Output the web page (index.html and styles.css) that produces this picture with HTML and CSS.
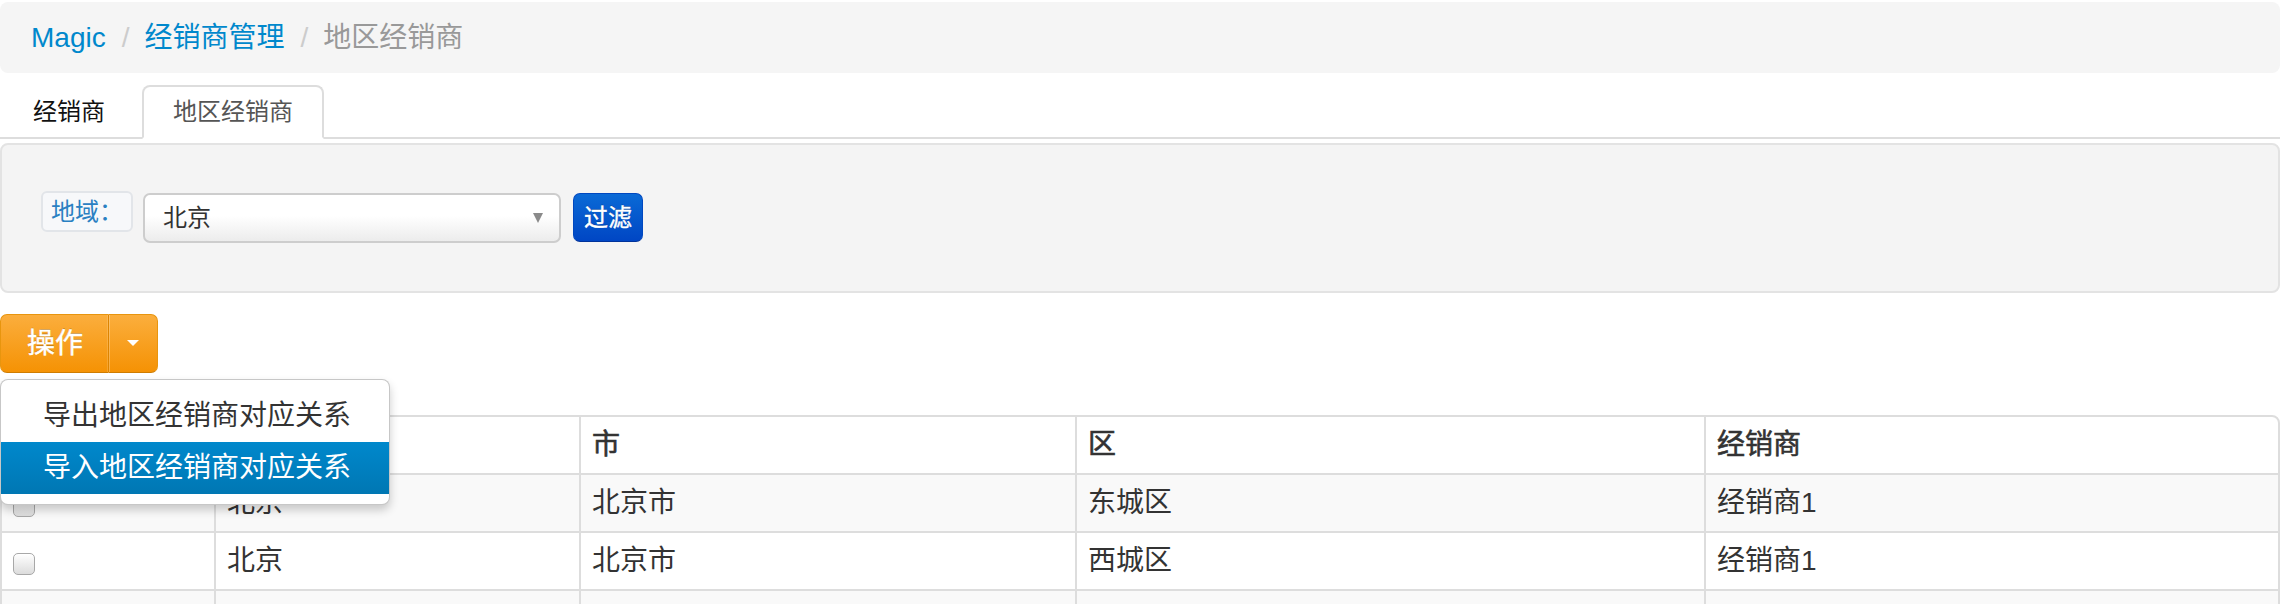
FILE: index.html
```html
<!DOCTYPE html>
<html lang="zh-CN">
<head>
<meta charset="utf-8">
<title>地区经销商</title>
<link rel="stylesheet" href="styles.css">
</head>
<body>
<div class="page">
  <ul class="breadcrumb">
    <li><a href="#">Magic</a><span class="divider">/</span></li>
    <li><a href="#">经销商管理</a><span class="divider">/</span></li>
    <li class="current">地区经销商</li>
  </ul>

  <ul class="tabs">
    <li class="tab"><a href="#">经销商</a></li>
    <li class="tab active"><a href="#">地区经销商</a></li>
  </ul>

  <div class="well">
    <form class="filter">
      <span class="addon">地域：</span>
      <div class="select"><span class="select-text">北京</span><span class="select-arrow"></span></div>
      <button type="button" class="btn btn-primary">过滤</button>
    </form>
  </div>

  <div class="actions">
    <div class="btn-group">
      <button type="button" class="btn btn-warning btn-main">操作</button>
      <button type="button" class="btn btn-warning btn-caret"><span class="caret"></span></button>
      <ul class="dropdown-menu">
        <li><a href="#">导出地区经销商对应关系</a></li>
        <li class="hover"><a href="#">导入地区经销商对应关系</a></li>
      </ul>
    </div>
  </div>

  <table class="grid">
    <thead>
      <tr>
        <th class="c1"></th>
        <th class="c2">省</th>
        <th class="c3">市</th>
        <th class="c4">区</th>
        <th class="c5">经销商</th>
      </tr>
    </thead>
    <tbody>
      <tr>
        <td><span class="check"></span></td>
        <td>北京</td>
        <td>北京市</td>
        <td>东城区</td>
        <td>经销商1</td>
      </tr>
      <tr>
        <td><span class="check"></span></td>
        <td>北京</td>
        <td>北京市</td>
        <td>西城区</td>
        <td>经销商1</td>
      </tr>
      <tr>
        <td>&nbsp;</td>
        <td>&nbsp;</td>
        <td>&nbsp;</td>
        <td>&nbsp;</td>
        <td>&nbsp;</td>
      </tr>
    </tbody>
  </table>
</div>
</body>
</html>
```

FILE: styles.css
```css
html, body {
  margin: 0;
  padding: 0;
  overflow: hidden;
  background: #fff;
}

body {
  font-family: "Liberation Sans", "Noto Sans CJK SC", sans-serif;
  color: #333;
}

.page {
  width: 2280px;
  padding-top: 2px;
}

a {
  text-decoration: none;
}

ul {
  list-style: none;
  margin: 0;
  padding: 0;
}

/* breadcrumb */
.breadcrumb {
  display: flex;
  background: #f5f5f5;
  border-radius: 8px;
  padding: 16px 31px 15px;
  font-size: 28px;
  line-height: 40px;
}

.breadcrumb a {
  color: #0088cc;
}

.breadcrumb .divider {
  color: #cccccc;
  padding: 0 15px 0 16px;
}

.breadcrumb .current {
  color: #999999;
}

/* tabs */
.tabs {
  display: flex;
  margin-top: 12px;
  border-bottom: 2px solid #dddddd;
  font-size: 24px;
  line-height: 34px;
}

.tab {
  margin-bottom: -2px;
}

.tab:first-child {
  margin-left: 2px;
  margin-right: 6px;
}

.tab a {
  display: block;
  padding: 8px 29px;
  border: 2px solid transparent;
  border-radius: 8px 8px 0 0;
  color: #111;
}

.tab.active a {
  background: #fff;
  border-color: #dddddd;
  border-bottom-color: #fff;
  color: #555;
}

/* filter well */
.well {
  margin-top: 4px;
  background: #f4f4f4;
  border: 2px solid #e3e3e3;
  border-radius: 8px;
  padding: 46px 39px 48px;
}

.filter {
  display: flex;
  align-items: flex-start;
  margin: 0;
}

.addon {
  display: block;
  height: 37px;
  padding: 0 8px;
  border: 2px solid #e2e5e9;
  border-radius: 6px;
  background: #f7f8fa;
  color: #2a80c2;
  font-size: 24px;
  line-height: 37px;
}

.select {
  display: flex;
  align-items: center;
  box-sizing: border-box;
  width: 418px;
  height: 50px;
  margin: 2px 0 0 10px;
  padding: 0 16px 0 18px;
  border: 2px solid #cdcdcd;
  border-radius: 7px;
  background: linear-gradient(#ffffff 45%, #ececec);
  font-size: 24px;
  line-height: 46px;
  color: #333;
}

.select-arrow {
  margin-left: auto;
  width: 0;
  height: 0;
  border-left: 5px solid transparent;
  border-right: 5px solid transparent;
  border-top: 10px solid #8a8a8a;
}

.btn {
  font-family: inherit;
  color: #fff;
  cursor: pointer;
  text-shadow: 0 -1px 0 rgba(0, 0, 0, 0.25);
  border: 1px solid;
  margin: 0;
  -webkit-text-stroke: 0.4px #fff;
}

.btn-primary {
  box-sizing: border-box;
  width: 70px;
  height: 49px;
  margin: 2px 0 0 12px;
  padding: 0;
  font-size: 24px;
  line-height: 45px;
  border-radius: 7px;
  background: linear-gradient(#0a6ad6, #0046c4);
  border-color: #0048c0 #0048c0 #00329a;
}

/* action button group */
.actions {
  margin-top: 21px;
}

.btn-group {
  position: relative;
  display: inline-flex;
}

.btn-warning {
  background: linear-gradient(#fbae3d, #f59204);
  border-color: #e8950e #e8950e #cf7c00;
  height: 59px;
  font-size: 28px;
  line-height: 40px;
}

.btn-main {
  padding: 0 25px 0 26px;
  border-radius: 7px 0 0 7px;
  border-right: none;
  box-shadow: inset -1px 0 0 rgba(255, 255, 255, 0.15);
}

.btn-caret {
  width: 50px;
  padding: 0;
  border-left: 1px solid #dd8400;
  border-radius: 0 7px 7px 0;
  display: flex;
  align-items: center;
  justify-content: center;
  box-shadow: inset 1px 0 0 rgba(255, 255, 255, 0.25);
}

.caret {
  width: 0;
  height: 0;
  border-left: 6px solid transparent;
  border-right: 6px solid transparent;
  border-top: 6px solid #fff;
  margin-top: -2px;
}

.dropdown-menu {
  position: absolute;
  top: 65px;
  left: 0;
  z-index: 10;
  width: 388px;
  padding: 10px 0;
  background: #fff;
  border: 1px solid rgba(0, 0, 0, 0.22);
  border-radius: 8px;
  box-shadow: 0 5px 10px rgba(0, 0, 0, 0.2);
  font-size: 28px;
  line-height: 40px;
}

.dropdown-menu a {
  display: block;
  padding: 6px 42px;
  color: #333;
  white-space: nowrap;
}

.dropdown-menu .hover a {
  color: #fff;
  background: linear-gradient(#0088cc, #0077b3);
}

/* table */
.grid {
  margin-top: 42px;
  width: 2280px;
  table-layout: fixed;
  border-collapse: separate;
  border-spacing: 0;
  border: 2px solid #dddddd;
  border-radius: 8px;
  font-size: 28px;
  line-height: 40px;
}

.grid th,
.grid td {
  box-sizing: border-box;
  padding: 8px 11px;
  text-align: left;
  vertical-align: middle;
  border-left: 2px solid #dddddd;
  border-top: 2px solid #dddddd;
  white-space: nowrap;
}

.grid th {
  font-weight: normal;
  -webkit-text-stroke: 0.6px #333;
  color: #333;
  border-top: none;
}

.grid tr > :first-child {
  border-left: none;
}

.grid th.c1 { width: 212px; }
.grid th.c2 { width: 365px; }
.grid th.c3 { width: 496px; }
.grid th.c4 { width: 629px; }

.grid thead th:first-child { border-top-left-radius: 6px; }
.grid thead th:last-child { border-top-right-radius: 6px; }

.grid tbody tr:nth-child(odd) td {
  background: #f9f9f9;
}

.check {
  display: inline-block;
  box-sizing: border-box;
  width: 22px;
  height: 22px;
  margin-top: 2px;
  vertical-align: middle;
  border: 1px solid #a8a8a8;
  border-radius: 5px;
  background: linear-gradient(#ffffff, #dcdcdc);
  box-shadow: inset 0 1px 0 #fff;
}
```
